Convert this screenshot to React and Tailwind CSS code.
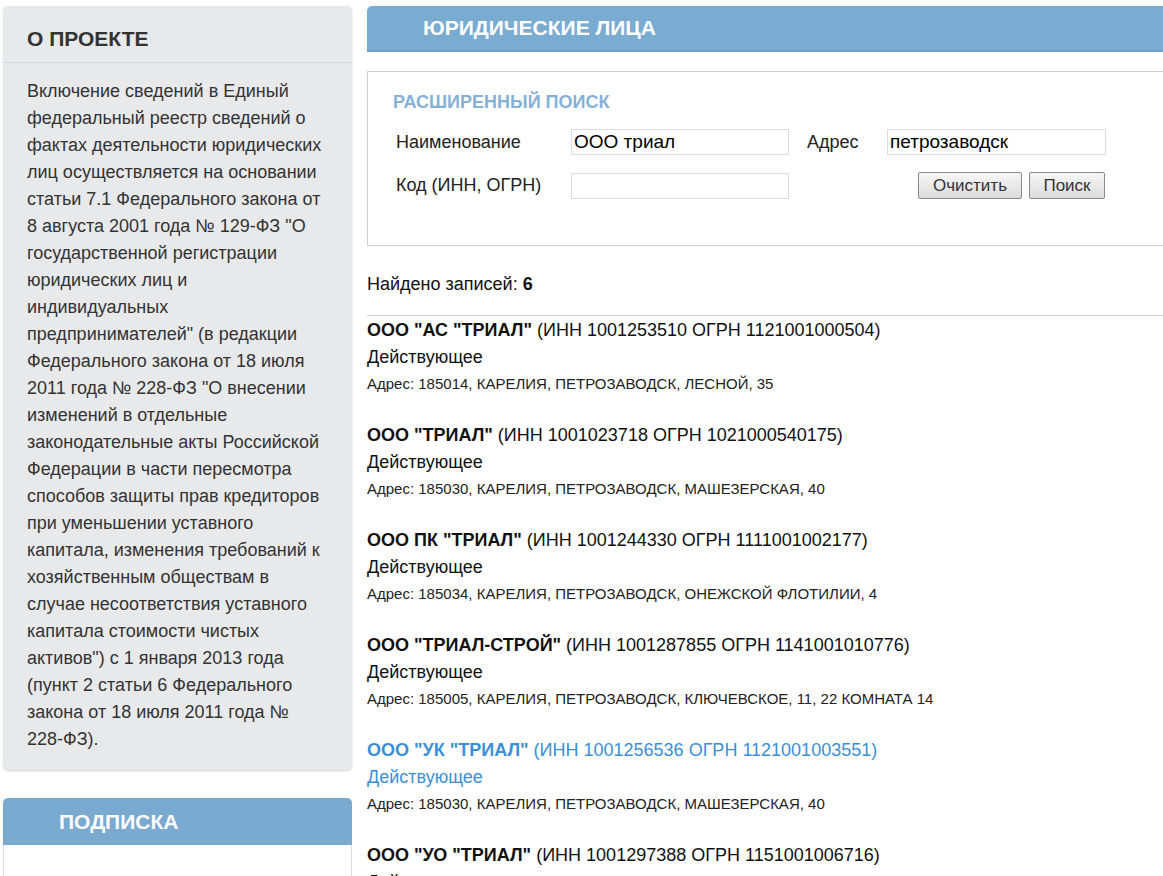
import React from 'react';

const ABOUT_LINES = [
  'Включение сведений в Единый',
  'федеральный реестр сведений о',
  'фактах деятельности юридических',
  'лиц осуществляется на основании',
  'статьи 7.1 Федерального закона от',
  '8 августа 2001 года № 129-ФЗ "О',
  'государственной регистрации',
  'юридических лиц и',
  'индивидуальных',
  'предпринимателей" (в редакции',
  'Федерального закона от 18 июля',
  '2011 года № 228-ФЗ "О внесении',
  'изменений в отдельные',
  'законодательные акты Российской',
  'Федерации в части пересмотра',
  'способов защиты прав кредиторов',
  'при уменьшении уставного',
  'капитала, изменения требований к',
  'хозяйственным обществам в',
  'случае несоответствия уставного',
  'капитала стоимости чистых',
  'активов") с 1 января 2013 года',
  '(пункт 2 статьи 6 Федерального',
  'закона от 18 июля 2011 года №',
  '228-ФЗ).',
];

const RESULTS = [
  { name: 'ООО "АС "ТРИАЛ"', inn: '1001253510', ogrn: '1121001000504', addr: '185014, КАРЕЛИЯ, ПЕТРОЗАВОДСК, ЛЕСНОЙ, 35' },
  { name: 'ООО "ТРИАЛ"', inn: '1001023718', ogrn: '1021000540175', addr: '185030, КАРЕЛИЯ, ПЕТРОЗАВОДСК, МАШЕЗЕРСКАЯ, 40' },
  { name: 'ООО ПК "ТРИАЛ"', inn: '1001244330', ogrn: '1111001002177', addr: '185034, КАРЕЛИЯ, ПЕТРОЗАВОДСК, ОНЕЖСКОЙ ФЛОТИЛИИ, 4' },
  { name: 'ООО "ТРИАЛ-СТРОЙ"', inn: '1001287855', ogrn: '1141001010776', addr: '185005, КАРЕЛИЯ, ПЕТРОЗАВОДСК, КЛЮЧЕВСКОЕ, 11, 22 КОМНАТА 14' },
  { name: 'ООО "УК "ТРИАЛ"', inn: '1001256536', ogrn: '1121001003551', addr: '185030, КАРЕЛИЯ, ПЕТРОЗАВОДСК, МАШЕЗЕРСКАЯ, 40', hover: true },
  { name: 'ООО "УО "ТРИАЛ"', inn: '1001297388', ogrn: '1151001006716', addr: '185030, КАРЕЛИЯ, ПЕТРОЗАВОДСК', },
];

function ResultItem({ item }) {
  const color = item.hover ? 'text-[#3b8fd8]' : 'text-[#111]';
  return (
    <div className="h-[105px]">
      <div className={`h-[27px] leading-[27px] text-[18px] whitespace-nowrap ${color}`}>
        <span className="font-bold">{item.name}</span> (ИНН {item.inn} ОГРН {item.ogrn})
      </div>
      <div className={`h-[27px] leading-[27px] text-[18px] ${color}`}>Действующее</div>
      <div className="h-[26px] leading-[26px] text-[15px] text-[#222] whitespace-nowrap">Адрес: {item.addr}</div>
    </div>
  );
}

export default function App() {
  return (
    <div className="w-[1163px] h-[876px] overflow-hidden bg-white font-['Liberation_Sans',Arial,sans-serif] flex items-start gap-[15px] pt-[6px] pl-[3px]">
      {/* левая колонка */}
      <div className="w-[349px] shrink-0 flex flex-col">
        <div className="bg-[#e8e9eb] rounded-[5px] shadow-[0_1px_2px_rgba(0,0,0,0.18)]">
          <div className="h-[57px] flex items-end pb-[10px] pl-[24px] border-b border-[#d2d4d7]">
            <span className="text-[21px] leading-[26px] font-bold text-[#333]">О ПРОЕКТЕ</span>
          </div>
          <div className="pl-[24px] pt-[15px] pb-[17px] text-[18px] leading-[27px] text-[#333]">
            {ABOUT_LINES.map((l, i) => (
              <div key={i} className="whitespace-nowrap">{l}</div>
            ))}
          </div>
        </div>

        <div className="mt-[28px] h-[47px] bg-[#7aaad0] rounded-t-[5px] flex items-center pl-[56px]">
          <span className="text-[21px] font-bold text-white">ПОДПИСКА</span>
        </div>
        <div className="h-[60px] border-x border-[#ddd] bg-white" />
      </div>

      {/* правая колонка */}
      <div className="w-[820px] shrink-0 flex flex-col">
        <div className="h-[46px] bg-[#7aabd1] rounded-tl-[5px] border-b-2 border-[#6f9fc6] flex items-center pl-[56px]">
          <span className="text-[21px] font-bold text-white">ЮРИДИЧЕСКИЕ ЛИЦА</span>
        </div>

        <div className="mt-[19px] h-[175px] border border-[#cfcfcf] pl-[25px] pt-[19px]">
          <div className="text-[18px] font-bold text-[#86b1d6] leading-[22px]">РАСШИРЕННЫЙ ПОИСК</div>
          <div className="mt-[16px] flex items-center h-[26px]">
            <div className="w-[178px] pl-[3px] text-[18px] text-[#222]">Наименование</div>
            <input
              className="w-[218px] h-[26px] border border-[#dcdcdc] px-[2px] text-[19px] text-black outline-none"
              defaultValue="ООО триал"
            />
            <div className="w-[98px] pl-[18px] text-[18px] text-[#222]">Адрес</div>
            <input
              className="w-[219px] h-[26px] border border-[#dcdcdc] px-[2px] text-[19px] text-black outline-none"
              defaultValue="петрозаводск"
            />
          </div>
          <div className="mt-[17px] flex items-center h-[27px]">
            <div className="w-[178px] pl-[3px] text-[18px] text-[#222]">Код (ИНН, ОГРН)</div>
            <input className="w-[218px] h-[26px] border border-[#dcdcdc] outline-none" />
            <div className="w-[129px]" />
            <button className="w-[104px] h-[27px] border border-[#8a8a8a] rounded-[2px] bg-gradient-to-b from-[#f6f6f6] to-[#dcdcdc] text-[17px] text-[#333]">
              Очистить
            </button>
            <button className="ml-[7px] w-[76px] h-[27px] border border-[#8a8a8a] rounded-[2px] bg-gradient-to-b from-[#f6f6f6] to-[#dcdcdc] text-[17px] text-[#333]">
              Поиск
            </button>
          </div>
        </div>

        <div className="mt-[27px] text-[18px] text-[#111] leading-[22px]">
          Найдено записей: <span className="font-bold">6</span>
        </div>
        <div className="mt-[20px] border-t border-[#cfcfcf]" />
        <div className="pt-[1px]">
          {RESULTS.map((r, i) => (
            <ResultItem key={i} item={r} />
          ))}
        </div>
      </div>
    </div>
  );
}
